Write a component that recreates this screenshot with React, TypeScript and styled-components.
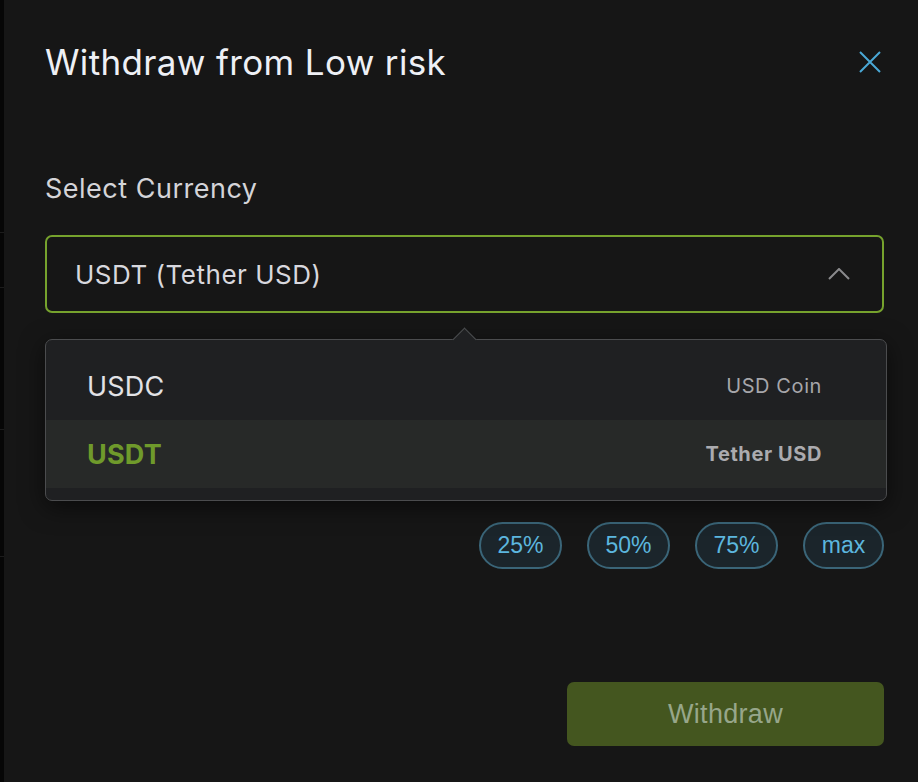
import React from "react";
import styled, { createGlobalStyle } from "styled-components";

const Global = createGlobalStyle`
  html, body { margin: 0; padding: 0; background: #161616; }
  body { font-family: Inter, "Noto Sans", sans-serif; -webkit-font-smoothing: antialiased; }
  * { box-sizing: border-box; }
`;

const Page = styled.div`
  display: flex;
  width: 918px;
  height: 782px;
  overflow: hidden;
  background: #161616;
`;

const Strip = styled.div`
  width: 4px;
  flex: none;
  display: flex;
  flex-direction: column;
  background: #060606;
`;

const StripRow = styled.div<{ $h: number }>`
  height: ${(p) => p.$h}px;
  flex: none;
  border-bottom: 1px solid #1c1c1c;
`;

const Modal = styled.div`
  flex: 1;
  display: flex;
  flex-direction: column;
  padding: 41px 34px 0 41px;
  background: #161616;
`;

const Header = styled.div`
  display: flex;
  align-items: center;
  justify-content: space-between;
  height: 42px;
`;

const Title = styled.h1`
  margin: 0;
  font-family: Inter, sans-serif;
  font-weight: 400;
  font-size: 35px;
  line-height: 42px;
  color: #eef0f5;
  letter-spacing: 0.35px;
`;

const CloseButton = styled.button`
  width: 24px;
  height: 24px;
  margin-right: 2px;
  padding: 0;
  border: none;
  background: none;
  display: flex;
  align-items: center;
  justify-content: center;
  cursor: pointer;
`;

const Label = styled.div`
  margin-top: 90px;
  font-size: 27px;
  line-height: 32px;
  letter-spacing: 0.5px;
  color: #d4d4d8;
`;

const SelectWrap = styled.div`
  position: relative;
  margin-top: 30px;
`;

const SelectBox = styled.div`
  height: 78px;
  border: 2px solid #76a22d;
  border-radius: 7px;
  display: flex;
  align-items: center;
  justify-content: space-between;
  padding: 0 32px 0 28px;
  font-size: 26px;
  letter-spacing: 0.5px;
  color: #d8d8de;
`;

const Dropdown = styled.div`
  position: absolute;
  top: 104px;
  left: 0;
  right: -3px;
  padding: 12px 0;
  background: #1f2022;
  border: 1px solid #4b4c4e;
  border-radius: 7px;
  box-shadow: 0 6px 24px rgba(0, 0, 0, 0.55);
  z-index: 5;

  &::before {
    content: "";
    position: absolute;
    top: -9px;
    left: 410px;
    width: 16px;
    height: 16px;
    background: #1f2022;
    border-top: 1px solid #4b4c4e;
    border-left: 1px solid #4b4c4e;
    transform: rotate(45deg);
  }
`;

const Option = styled.div<{ $active?: boolean }>`
  position: relative;
  height: 68px;
  display: flex;
  align-items: center;
  justify-content: space-between;
  padding: 0 64px 0 41px;
  background: ${(p) => (p.$active ? "#272928" : "transparent")};
`;

const Code = styled.span<{ $active?: boolean }>`
  font-size: 27px;
  font-weight: ${(p) => (p.$active ? 700 : 400)};
  letter-spacing: 0.2px;
  color: ${(p) => (p.$active ? "#6f9a2b" : "#e2e2e6")};
`;

const Name = styled.span<{ $active?: boolean }>`
  font-size: 20px;
  font-weight: ${(p) => (p.$active ? 700 : 400)};
  letter-spacing: 0.6px;
  color: ${(p) => (p.$active ? "#ababaf" : "#a6a6aa")};
`;

const Pills = styled.div`
  margin-top: 209px;
  display: flex;
  justify-content: flex-end;
  gap: 25px;
`;

const Pill = styled.button`
  width: 83px;
  height: 47px;
  border: 2px solid #3a6578;
  border-radius: 24px;
  background: #1b252b;
  color: #5cb6de;
  font-family: "Liberation Sans", Arial, sans-serif;
  font-size: 23px;
  padding: 0;
  display: flex;
  align-items: center;
  justify-content: center;

  &:last-child {
    width: 81px;
  }
`;

const Footer = styled.div`
  margin-top: 113px;
  display: flex;
  justify-content: flex-end;
`;

const WithdrawButton = styled.button`
  width: 317px;
  height: 64px;
  border: none;
  border-radius: 7px;
  background: #44561f;
  color: #97a68a;
  font-family: "Liberation Sans", Arial, sans-serif;
  font-size: 27px;
  letter-spacing: 0.3px;
  padding: 0;
`;

const options = [
  { code: "USDC", name: "USD Coin" },
  { code: "USDT", name: "Tether USD", active: true },
];

export default function App() {
  return (
    <>
      <Global />
      <Page>
        <Strip>
          <StripRow $h={233} />
          <StripRow $h={55} />
          <StripRow $h={142} />
          <StripRow $h={127} />
        </Strip>
        <Modal>
          <Header>
            <Title>Withdraw from Low risk</Title>
            <CloseButton aria-label="Close">
              <svg width="22" height="22" viewBox="0 0 22 22">
                <path d="M1 1 L21 21 M21 1 L1 21" stroke="#4aa8d6" strokeWidth="2" fill="none" />
              </svg>
            </CloseButton>
          </Header>
          <Label>Select Currency</Label>
          <SelectWrap>
            <SelectBox>
              <span>USDT (Tether USD)</span>
              <svg width="22" height="12" viewBox="0 0 22 12">
                <path d="M1 11 L11 1 L21 11" stroke="#8a8a8c" strokeWidth="2" fill="none" />
              </svg>
            </SelectBox>
            <Dropdown>
              {options.map((o) => (
                <Option key={o.code} $active={o.active}>
                  <Code $active={o.active}>{o.code}</Code>
                  <Name $active={o.active}>{o.name}</Name>
                </Option>
              ))}
            </Dropdown>
          </SelectWrap>
          <Pills>
            {["25%", "50%", "75%", "max"].map((p) => (
              <Pill key={p}>{p}</Pill>
            ))}
          </Pills>
          <Footer>
            <WithdrawButton>Withdraw</WithdrawButton>
          </Footer>
        </Modal>
      </Page>
    </>
  );
}
